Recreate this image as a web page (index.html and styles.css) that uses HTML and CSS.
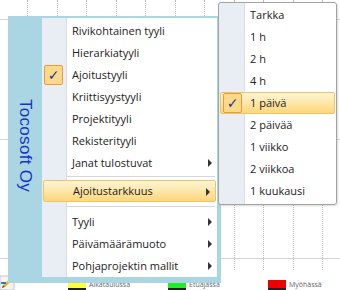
FILE: index.html
```html
<!DOCTYPE html>
<html lang="fi">
<head>
    <meta charset="UTF-8">
    <title>Ajoitustarkkuus</title>
    <link rel="stylesheet" href="styles.css">
</head>
<body>
    <div class="chart">
        <div class="grid">
            <div class="col"></div><div class="col"></div><div class="col"></div>
            <div class="col"></div><div class="col"></div><div class="col"></div>
            <div class="col"></div><div class="col"></div><div class="col"></div>
            <div class="col"></div><div class="col"></div>
        </div>
        <div class="band"></div>
        <div class="band"></div>
    </div>

    <div class="legend">
        <svg class="tool-icon" width="16" height="16" viewBox="0 0 16 16">
            <rect x="0" y="2" width="14" height="14" fill="#f4f4f4" stroke="#c8c8c8"/>
            <path d="M3 11 L11 4 L13 6 L5 13 Z" fill="#f5b21e"/>
            <path d="M11 4 L13 6 L14 4 L13 3 Z" fill="#e0421c"/>
            <path d="M2 14 L3 11 L5 13 Z" fill="#7a4a1a"/>
            <rect x="1" y="8" width="5" height="2" fill="#2a7ad0"/>
        </svg>
        <div class="legend-item"><span class="swatch yellow"></span>Aikataulussa</div>
        <div class="legend-item"><span class="swatch green"></span>Etuajassa</div>
        <div class="legend-item"><span class="swatch red"></span>Myöhässä</div>
    </div>

    <div class="menu">
        <div class="brand"><span>Tocosoft Oy</span></div>
        <div class="items">
            <div class="item">Rivikohtainen tyyli</div>
            <div class="item">Hierarkiatyyli</div>
            <div class="item checked"><span class="check">✓</span>Ajoitustyyli</div>
            <div class="item">Kriittisyystyyli</div>
            <div class="item">Projektityyli</div>
            <div class="item">Rekisterityyli</div>
            <div class="item sub">Janat tulostuvat</div>
            <div class="sep first"></div>
            <div class="item sub active">Ajoitustarkkuus</div>
            <div class="sep second"></div>
            <div class="item sub">Tyyli</div>
            <div class="item sub">Päivämäärämuoto</div>
            <div class="item sub">Pohjaprojektin mallit</div>
        </div>
    </div>

    <div class="submenu">
        <div class="item">Tarkka</div>
        <div class="item">1 h</div>
        <div class="item">2 h</div>
        <div class="item">4 h</div>
        <div class="item checked active"><span class="check">✓</span>1 päivä</div>
        <div class="item">2 päivää</div>
        <div class="item">1 viikko</div>
        <div class="item">2 viikkoa</div>
        <div class="item">1 kuukausi</div>
    </div>
</body>
</html>
```

FILE: styles.css
```css
body {
    margin: 0;
    width: 340px;
    height: 290px;
    position: relative;
    overflow: hidden;
    background: #ffffff;
    font-family: 'Open Sans', 'Noto Sans', sans-serif;
    font-size: 11px;
    color: #222222;
}

/* chart behind the menus */
.chart {
    position: relative;
    height: 272px;
    padding-top: 19px;
    box-sizing: border-box;
}

.grid {
    position: absolute;
    top: 0;
    left: 0;
    right: 0;
    height: 270px;
    display: flex;
    padding-left: 27px;
    overflow: hidden;
}

.col {
    flex: 0 0 29.5px;
    border-left: 1px dotted #b8b8b8;
    box-sizing: border-box;
}

.col:last-child {
    flex: 0 0 1px;
}

.band {
    height: 120px;
    border-top: 1px solid #d6d6d6;
    box-sizing: border-box;
}

.band:last-child {
    border-bottom: 1px solid #d6d6d6;
}

.legend {
    display: flex;
    align-items: flex-start;
    height: 18px;
    font-size: 7px;
    line-height: 9px;
    color: #666;
}

.tool-icon {
    margin-top: 2px;
    flex: none;
}

.legend-item {
    display: flex;
    align-items: flex-start;
    margin-left: 52px;
    width: 48px;
    padding-top: 8px;
    white-space: nowrap;
}

.swatch {
    width: 18px;
    height: 8px;
    margin-right: 3px;
    border-bottom: 2px solid #222;
    flex: none;
}

.yellow { background: #ffff33; }
.green { background: #22ee22; }
.red { background: #ee0000; }

/* context menu */
.menu {
    position: absolute;
    left: 8px;
    top: 16px;
    width: 209px;
    display: flex;
    background: #aad6e3;
    padding: 2px 4px 6px 0;
}

.brand {
    width: 34px;
    display: flex;
    justify-content: center;
    padding-top: 81px;
}

.brand span {
    writing-mode: vertical-rl;
    font-family: 'Liberation Sans', Arial, sans-serif;
    font-size: 17px;
    color: #1534c8;
    letter-spacing: 0.3px;
}

.items {
    flex: 1;
    background: linear-gradient(to right, #e9eef5 0, #e9eef5 24px, #d9dde3 24px, #d9dde3 25px, #ffffff 25px);
    padding: 2px 0 0 0;
}

.item {
    position: relative;
    height: 22px;
    line-height: 22px;
    padding-left: 30px;
    white-space: nowrap;
    box-sizing: border-box;
}

.sub::after {
    content: "";
    position: absolute;
    right: 5px;
    top: 7px;
    border-left: 4px solid #333;
    border-top: 4px solid transparent;
    border-bottom: 4px solid transparent;
}

.active {
    background: linear-gradient(to bottom, #fef5d6, #fde39e 60%, #fcd77c);
    border: 1px solid #ecc46a;
    border-radius: 2px;
    line-height: 20px;
    padding-left: 29px;
    margin: 0 1px;
}

.check {
    position: absolute;
    left: 1px;
    top: 0;
    width: 17px;
    height: 18px;
    line-height: 18px;
    text-align: center;
    background: #fcd98a;
    border: 1px solid #e89a3c;
    border-radius: 2px;
    color: #1a3b8e;
    font-family: 'DejaVu Sans', sans-serif;
    font-size: 14px;
}

.menu .checked .check {
    left: 2px;
    top: 1px;
}

.sep {
    position: relative;
}

.sep::before {
    content: "";
    position: absolute;
    left: 25px;
    right: 2px;
    border-top: 1px solid #d4d7dc;
    border-bottom: 1px solid #ffffff;
}

.sep.first {
    height: 6px;
}

.sep.first::before {
    top: 2px;
}

.sep.second {
    height: 9px;
}

.sep.second::before {
    top: 4px;
}

/* submenu */
.submenu {
    position: absolute;
    left: 218px;
    top: 2px;
    width: 117px;
    padding: 1px 0 2px 0;
    border: 1px solid #a3a3a3;
    border-radius: 3px;
    background: linear-gradient(to right, #e9eef5 0, #e9eef5 25px, #d9dde3 25px, #d9dde3 26px, #ffffff 26px);
    box-shadow: 1px 1px 2px rgba(0, 0, 0, 0.15);
}

.submenu .item {
    padding-left: 31px;
}

.submenu .active {
    padding-left: 29px;
}

.submenu .check {
    left: 2px;
}
```
